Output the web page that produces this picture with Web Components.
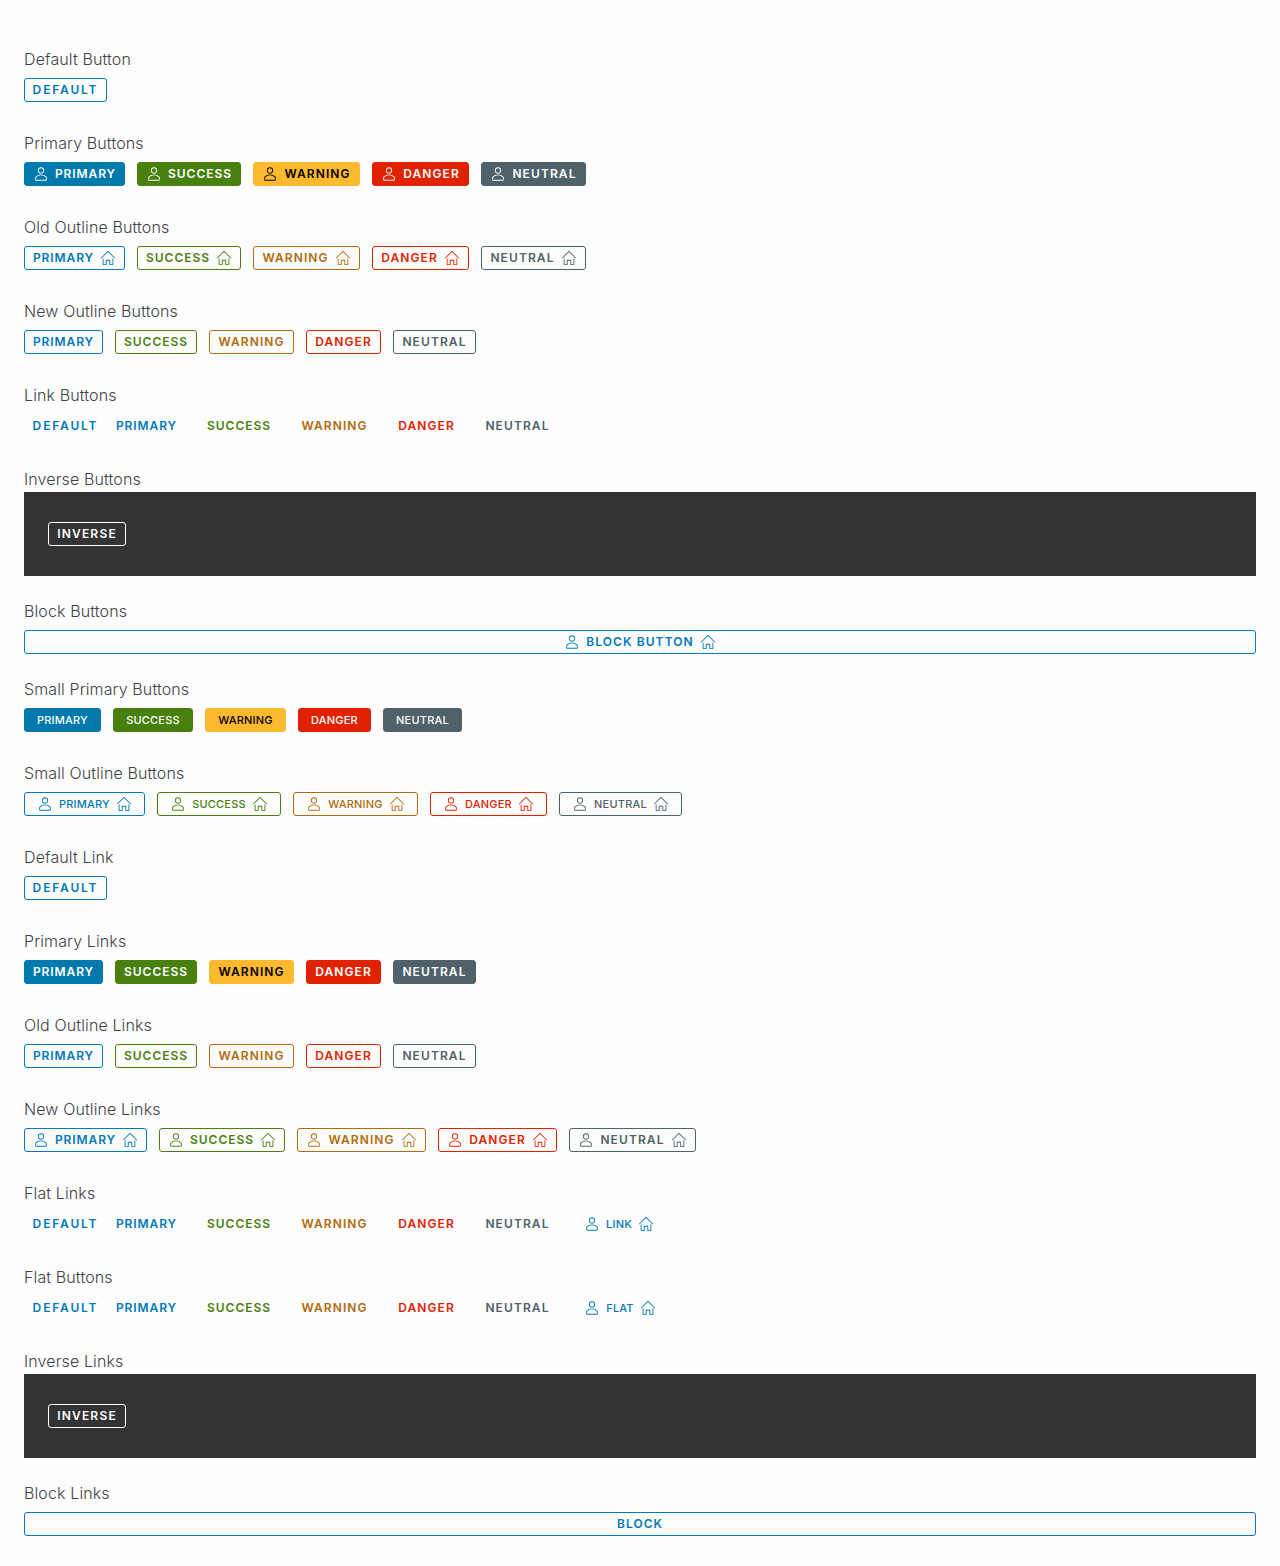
<!DOCTYPE html>
<html lang="en"><head><meta charset="utf-8"><title>Buttons</title>
<style>
html,body{margin:0;padding:0;background:#fdfdfd;}
body{padding:48px 24px 30px;font-family:Inter,"Liberation Sans",sans-serif;}
.joined{display:flex;}
</style></head><body>
<script>
const ICONS={
user:'<svg viewBox="0 0 36 36" width="16" height="16" fill="currentColor"><path d="M18,17a7,7,0,1,0-7-7A7,7,0,0,0,18,17ZM18,5a5,5,0,1,1-5,5A5,5,0,0,1,18,5Z"/><path d="M30.47,24.37a17.16,17.16,0,0,0-24.93,0A2,2,0,0,0,5,25.74V31a2,2,0,0,0,2,2H29a2,2,0,0,0,2-2V25.74A2,2,0,0,0,30.47,24.37ZM29,31H7V25.73a15.17,15.17,0,0,1,22,0h0Z"/></svg>',
home:'<svg viewBox="0 0 36 36" width="16" height="16" fill="currentColor"><path d="M33.71,17.29l-15-15a1,1,0,0,0-1.41,0l-15,15a1,1,0,0,0,1.41,1.41L18,4.41,32.29,18.71a1,1,0,0,0,1.41-1.41Z"/><path d="M28,32h-5V22H13V32H8V18L6,20V32a2,2,0,0,0,2,2h7V24h6V34h7a2,2,0,0,0,2-2V19.76l-2-2Z"/></svg>'};
const LS={DEFAULT:1.85,PRIMARY:.9,SUCCESS:.95,WARNING:1.1,DANGER:1.1,NEUTRAL:1.1,INVERSE:1.2,'BLOCK BUTTON':1.1,BLOCK:1};
const tplBtn=document.createElement('template');
tplBtn.innerHTML=`<style>
:host{display:inline-flex;flex:none;box-sizing:border-box;height:24px;align-items:center;justify-content:center;gap:6px;
 border:1px solid var(--c);border-radius:3px;color:var(--c);background:transparent;font:600 12px/22px Inter,"Liberation Sans",sans-serif;letter-spacing:var(--ls,.9px);white-space:nowrap;--c:#0079b8;}
:host([tone=primary]){--c:#0079b8}
:host([tone=success]){--c:#4a7f0f}
:host([tone=warning]){--c:#b06a0c}
:host([tone=danger]){--c:#e12200}
:host([tone=neutral]){--c:#4f6169}
:host([solid]){background:var(--c);color:#fff}
:host([solid][tone=primary]){--c:#0079ad}
:host([solid][tone=success]){--c:#47800d}
:host([solid][tone=warning]){--c:#ffb92e;color:#000}
:host([flat]){border-color:transparent}
:host([inverse]){--c:#fff}
:host([small]){font-size:11px;font-weight:500;letter-spacing:.2px}
:host([block]){display:flex;width:auto}
svg{display:block;flex:none}
.ico{display:contents}
span{display:block}
</style><span class="ico" id="a"></span><span><slot></slot></span><span class="ico" id="b"></span>`;
class XBtn extends HTMLElement{
 constructor(){super();this.attachShadow({mode:'open'}).appendChild(tplBtn.content.cloneNode(true));}
 connectedCallback(){
  const s=this.shadowRoot;
  if(this.hasAttribute('pre'))s.getElementById('a').innerHTML=ICONS.user;
  if(this.hasAttribute('post'))s.getElementById('b').innerHTML=ICONS.home;
  if(this.getAttribute('w'))this.style.width=this.getAttribute('w')+'px';
  const ls=LS[this.textContent.trim()];
  if(ls)this.style.setProperty('--ls',ls+'px');
 }
}
customElements.define('x-btn',XBtn);
const tplSec=document.createElement('template');
tplSec.innerHTML=`<style>
:host{display:block;margin-bottom:30px}
:host([block]){margin-bottom:24px}
:host([dark]){margin-bottom:24px}
:host(:last-of-type){margin-bottom:0}
h4{margin:0;padding-bottom:2px;font:300 16px/22px Inter,"Liberation Sans",sans-serif;color:#3f4347;letter-spacing:.12px}
.row{display:flex;gap:12px;margin-top:6px}
:host([dark]) .row{margin-top:0;background:#333;height:84px;padding:0 24px;align-items:center;box-sizing:border-box}
</style><h4 id="t"></h4><div class="row"><slot></slot></div>`;
class XSection extends HTMLElement{
 constructor(){super();this.attachShadow({mode:'open'}).appendChild(tplSec.content.cloneNode(true));}
 connectedCallback(){this.shadowRoot.getElementById('t').textContent=this.getAttribute('label');}
}
customElements.define('x-section',XSection);
const T=['primary','success','warning','danger','neutral'],U=T.map(x=>x.toUpperCase());
const W={big:[101,104,107,97,105],plain:[79,82,85,75,83],sm:[77,80,81,73,79],smo:[121,124,125,117,123],nl:[123,126,129,119,127]};
const set=(w,a)=>T.map((t,i)=>`<x-btn tone="${t}" w="${W[w][i]}" ${a}>${U[i]}</x-btn>`).join('');
const flat=(extra)=>`<div class="joined"><x-btn flat tone="primary" w="83">DEFAULT</x-btn><x-btn flat tone="primary" w="79">PRIMARY</x-btn></div>`+
 T.slice(1).map((t,i)=>`<x-btn flat tone="${t}" w="${W.plain[i+1]}">${U[i+1]}</x-btn>`).join('')+extra;
const sec=(l,h,a='')=>`<x-section label="${l}" ${a}>${h}</x-section>`;
document.body.insertAdjacentHTML('beforeend',[
sec('Default Button','<x-btn w="83">DEFAULT</x-btn>'),
sec('Primary Buttons',set('big','solid pre')),
sec('Old Outline Buttons',set('big','post')),
sec('New Outline Buttons',set('plain','')),
sec('Link Buttons',flat('')),
sec('Inverse Buttons','<x-btn inverse w="78">INVERSE</x-btn>','dark'),
sec('Block Buttons','<x-btn block pre post style="flex:1">BLOCK BUTTON</x-btn>','block'),
sec('Small Primary Buttons',set('sm','solid small')),
sec('Small Outline Buttons',set('smo','small pre post')),
sec('Default Link','<x-btn w="83">DEFAULT</x-btn>'),
sec('Primary Links',set('plain','solid')),
sec('Old Outline Links',set('plain','')),
sec('New Outline Links',set('nl','pre post')),
sec('Flat Links',flat('<x-btn flat small tone="primary" pre post w="96">LINK</x-btn>')),
sec('Flat Buttons',flat('<x-btn flat small tone="primary" pre post w="98">FLAT</x-btn>')),
sec('Inverse Links','<x-btn inverse w="78">INVERSE</x-btn>','dark'),
sec('Block Links','<x-btn block style="flex:1">BLOCK</x-btn>','block')
].join(''));
</script>
</body></html>
